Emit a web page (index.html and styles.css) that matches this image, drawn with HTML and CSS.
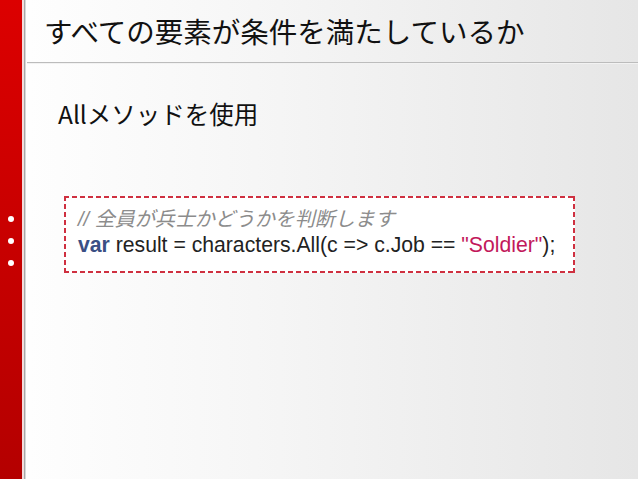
FILE: index.html
```html
<!DOCTYPE html>
<html lang="ja">
<head>
<meta charset="utf-8">
<link rel="stylesheet" href="styles.css">
</head>
<body>
<div class="slide">
  <aside class="rail">
    <span class="dot"></span>
    <span class="dot"></span>
    <span class="dot"></span>
  </aside>
  <main class="content">
    <header class="head">
      <h1 class="title">すべての要素が条件を満たしているか</h1>
    </header>
    <p class="lead">Allメソッドを使用</p>
    <div class="code">
      <div class="comment">// 全員が兵士かどうかを判断します</div>
      <div class="line"><span class="kw">var</span> result = characters.All(c =&gt; c.Job == <span class="str">"Soldier"</span>);</div>
    </div>
  </main>
</div>
</body>
</html>
```

FILE: styles.css
```css
html, body {
  margin: 0;
  padding: 0;
  width: 638px;
  height: 479px;
  overflow: hidden;
}

.slide {
  display: flex;
  width: 638px;
  height: 479px;
  background: linear-gradient(to right, #ffffff 0%, #f6f6f6 40%, #e6e6e6 100%);
}

.rail {
  width: 22px;
  flex: none;
  background: linear-gradient(to bottom, #dc0000 0%, #c80000 50%, #b40000 100%);
  border-right: 2px solid #f4dcdc;
  box-shadow: 1px 0 0 #a8a8a8, 2px 0 0 #d8d8d8;
  display: flex;
  flex-direction: column;
  align-items: center;
  padding-top: 216px;
  gap: 16px;
  box-sizing: content-box;
}

.dot {
  width: 6px;
  height: 6px;
  border-radius: 50%;
  background: #fff;
  flex: none;
}

.content {
  flex: 1;
  padding-left: 3px;
}

.head {
  height: 62px;
  border-bottom: 1px solid #bcbcbc;
  box-shadow: 0 1px 0 #f2f2f2;
  display: flex;
  align-items: center;
  padding-left: 17px;
}

.title {
  margin: 0;
  font-family: "Noto Sans CJK JP", sans-serif;
  font-weight: 400;
  font-size: 28.5px;
  color: #111;
  line-height: 1;
  margin-top: 1px;
}

.lead {
  margin: 37px 0 0 31px;
  font-family: "Noto Sans CJK JP", sans-serif;
  font-size: 24.5px;
  line-height: 28px;
  color: #111;
}

.code {
  margin: 68px 0 0 37px;
  width: 511px;
  box-sizing: border-box;
  background:
    repeating-linear-gradient(to right, #cf3040 0 5px, transparent 5px 8px) left top / 100% 2px no-repeat,
    repeating-linear-gradient(to right, #cf3040 0 5px, transparent 5px 8px) left bottom / 100% 2px no-repeat,
    repeating-linear-gradient(to bottom, #cf3040 0 5px, transparent 5px 8px) left top / 2px 100% no-repeat,
    repeating-linear-gradient(to bottom, #cf3040 0 5px, transparent 5px 8px) right top / 2px 100% no-repeat,
    #fff;
  padding: 11px 0 16px 14px;
  font-family: "Liberation Sans", "Noto Sans CJK JP", sans-serif;
  font-size: 21.2px;
  line-height: 25px;
  color: #222;
}

.comment {
  color: #8c8c8c;
  font-style: italic;
  font-size: 20px;
}

.kw {
  color: #3a4f84;
  font-weight: bold;
}

.str {
  color: #c2185b;
}
```
